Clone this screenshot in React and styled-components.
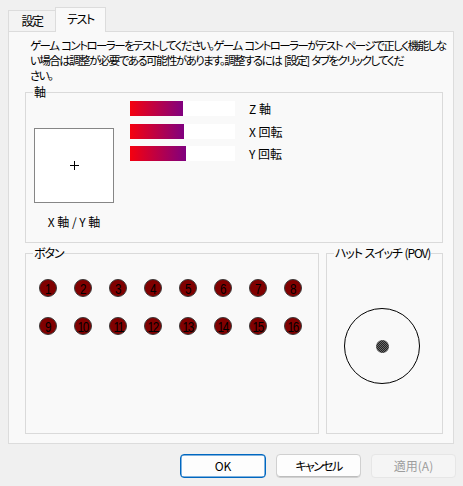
import React from "react";
import styled, { createGlobalStyle } from "styled-components";

const GlobalStyle = createGlobalStyle`
  html, body { margin: 0; padding: 0; background: #f0f0f0; }
  body {
    font-family: "Noto Sans CJK JP", "Noto Sans", sans-serif;
    font-size: 12px;
    color: #000;
    font-feature-settings: "palt";
  }
  * { box-sizing: border-box; }
`;

const Window = styled.div`
  width: 463px;
  height: 486px;
  display: flex;
  flex-direction: column;
  background: #f0f0f0;
`;

const TabStrip = styled.div`
  height: 31px;
  display: flex;
  align-items: flex-end;
  padding-left: 8px;
`;

const Tab = styled.div`
  position: relative;
  display: flex;
  align-items: center;
  justify-content: center;
  height: ${(p) => (p.$active ? "25px" : "21px")};
  width: ${(p) => (p.$active ? "51px" : "47px")};
  margin-bottom: ${(p) => (p.$active ? "-1px" : "0")};
  padding-bottom: ${(p) => (p.$active ? "2px" : "0")};
  background: ${(p) => (p.$active ? "#f9f9f9" : "#f3f3f3")};
  border: 1px solid #dcdcdc;
  border-bottom: none;
  border-right: ${(p) => (p.$active ? "1px solid #dcdcdc" : "none")};
  z-index: ${(p) => (p.$active ? 1 : 0)};
  line-height: 14px;
  letter-spacing: -1.4px;
`;

const Panel = styled.div`
  height: 413px;
  margin: 0 9px 0 8px;
  background: #f9f9f9;
  border: 1px solid #dcdcdc;
  display: flex;
  flex-direction: column;
  padding: 5.5px 10px 9px 16px;
`;

const Description = styled.p`
  margin: 0 0 2.5px 5px;
  font-size: 11.5px;
  letter-spacing: -1.55px;
  word-spacing: 1.8px;
  line-height: 15px;
  white-space: nowrap;
`;

const Group = styled.fieldset`
  margin: 0;
  padding: 0;
  min-width: 0;
  border: 1px solid #dadada;
  border-radius: 0;
`;

const Legend = styled.legend`
  margin-left: 7px;
  padding: 0 1px;
  line-height: 14px;
  font-size: 12px;
  letter-spacing: -1.1px;
  word-spacing: 1px;
  white-space: nowrap;
`;

const AxisGroup = styled(Group)`
  height: 158px;
`;

const AxisBody = styled.div`
  display: flex;
  align-items: flex-start;
  padding-left: 8px;
`;

const XYColumn = styled.div`
  display: flex;
  flex-direction: column;
  align-items: center;
  padding-top: 29px;
`;

const XYBox = styled.div`
  width: 80px;
  height: 75px;
  background: #fff;
  border: 1px solid #868686;
  display: flex;
  align-items: center;
  justify-content: center;
`;

const Caption = styled.div`
  margin-top: 11px;
  line-height: 15px;
`;

const BarList = styled.div`
  display: flex;
  flex-direction: column;
  gap: 7.5px;
  padding-top: 2px;
  margin-left: 16px;
`;

const BarRow = styled.div`
  display: flex;
  align-items: center;
  height: 15px;
`;

const Bar = styled.div`
  width: 105px;
  height: 15px;
  background: #fff;
  display: flex;
`;

const BarFill = styled.div`
  height: 100%;
  background: linear-gradient(90deg, #f5000e, #80007f);
`;

const BarLabel = styled.span`
  margin-left: 14px;
  line-height: 15px;
`;

const BottomRow = styled.div`
  flex: 1;
  display: flex;
  gap: 7px;
  margin-top: 3px;
`;

const ButtonsGroup = styled(Group)`
  width: 294px;
`;

const ButtonGrid = styled.div`
  display: grid;
  grid-template-columns: repeat(8, 18px);
  column-gap: 17px;
  row-gap: 20px;
  padding: 19px 0 0 13px;
`;

const JoyButton = styled.div`
  width: 18px;
  height: 18px;
  border-radius: 50%;
  background: #800000;
  border: 1px solid #3a3a3a;
  display: flex;
  align-items: center;
  justify-content: center;
  font-family: "Liberation Sans", sans-serif;
  font-size: 15px;
  line-height: 1;
  color: #000;
  letter-spacing: ${(p) => (p.$wide ? "-1.5px" : "0")};
  white-space: nowrap;
  font-feature-settings: normal;
`;

const Digits = styled.span`
  display: inline-block;
  transform: scaleX(0.78);
`;

const PovGroup = styled(Group)`
  flex: 1;
`;

const PovBody = styled.div`
  display: flex;
  justify-content: center;
  padding: 48px 5px 0 0;
`;

const PovRing = styled.div`
  width: 76px;
  height: 76px;
  border-radius: 50%;
  border: 1px solid #000;
  display: flex;
  align-items: center;
  justify-content: center;
`;

const PovDot = styled.div`
  width: 13px;
  height: 13px;
  border-radius: 50%;
  background: repeating-conic-gradient(#222 0 25%, #6a6a6a 0 50%) 0 0 / 2px 2px;
`;

const Footer = styled.div`
  display: flex;
  justify-content: flex-end;
  gap: 10px;
  padding: 10px 7px 0 0;
`;

const DialogButton = styled.button`
  width: ${(p) => (p.$variant === "default" ? "86px" : "85px")};
  height: 24px;
  border-radius: 4px;
  font-family: inherit;
  font-size: 12px;
  font-feature-settings: "palt";
  letter-spacing: ${(p) => (p.$variant ? "0" : "-1.6px")};
  padding: 0;
  line-height: 14px;
  background: ${(p) => (p.$variant === "disabled" ? "#f5f5f5" : "#fdfdfd")};
  color: ${(p) => (p.$variant === "disabled" ? "#9d9d9d" : "#000")};
  border: 1px solid
    ${(p) =>
      p.$variant === "default"
        ? "#0067c0"
        : p.$variant === "disabled"
        ? "#e6e6e6"
        : "#d0d0d0"};
  box-shadow: ${(p) =>
    p.$variant === "default"
      ? "inset 0 0 0 0.5px #0067c0"
      : p.$variant === "disabled"
      ? "none"
      : "inset 0 -1px 0 #bdbdbd"};
`;

const bars = [
  { label: "Z 軸", fill: 53 },
  { label: "X 回転", fill: 54 },
  { label: "Y 回転", fill: 56 },
];

export default function App() {
  return (
    <>
      <GlobalStyle />
      <Window>
        <TabStrip>
          <Tab>設定</Tab>
          <Tab $active>テスト</Tab>
        </TabStrip>
        <Panel>
          <Description>
            ゲーム コントローラーをテストしてください。ゲーム コントローラーがテスト ページで正しく機能しな
            <br />
            い場合は調整が必要である可能性があります。調整するには [設定] タブをクリックしてくだ
            <br />
            さい。
          </Description>
          <AxisGroup>
            <Legend>軸</Legend>
            <AxisBody>
              <XYColumn>
                <XYBox>
                  <svg width="9" height="9" viewBox="0 0 9 9">
                    <path d="M0 4.5H9M4.5 0V9" stroke="#000" strokeWidth="1" />
                  </svg>
                </XYBox>
                <Caption>X 軸 / Y 軸</Caption>
              </XYColumn>
              <BarList>
                {bars.map((b) => (
                  <BarRow key={b.label}>
                    <Bar>
                      <BarFill style={{ width: b.fill }} />
                    </Bar>
                    <BarLabel>{b.label}</BarLabel>
                  </BarRow>
                ))}
              </BarList>
            </AxisBody>
          </AxisGroup>
          <BottomRow>
            <ButtonsGroup>
              <Legend>ボタン</Legend>
              <ButtonGrid>
                {Array.from({ length: 16 }, (_, i) => (
                  <JoyButton key={i} $wide={i >= 9}>
                    <Digits>{i + 1}</Digits>
                  </JoyButton>
                ))}
              </ButtonGrid>
            </ButtonsGroup>
            <PovGroup>
              <Legend>ハット スイッチ (POV)</Legend>
              <PovBody>
                <PovRing>
                  <PovDot />
                </PovRing>
              </PovBody>
            </PovGroup>
          </BottomRow>
        </Panel>
        <Footer>
          <DialogButton $variant="default">OK</DialogButton>
          <DialogButton>キャンセル</DialogButton>
          <DialogButton $variant="disabled">適用(A)</DialogButton>
        </Footer>
      </Window>
    </>
  );
}
